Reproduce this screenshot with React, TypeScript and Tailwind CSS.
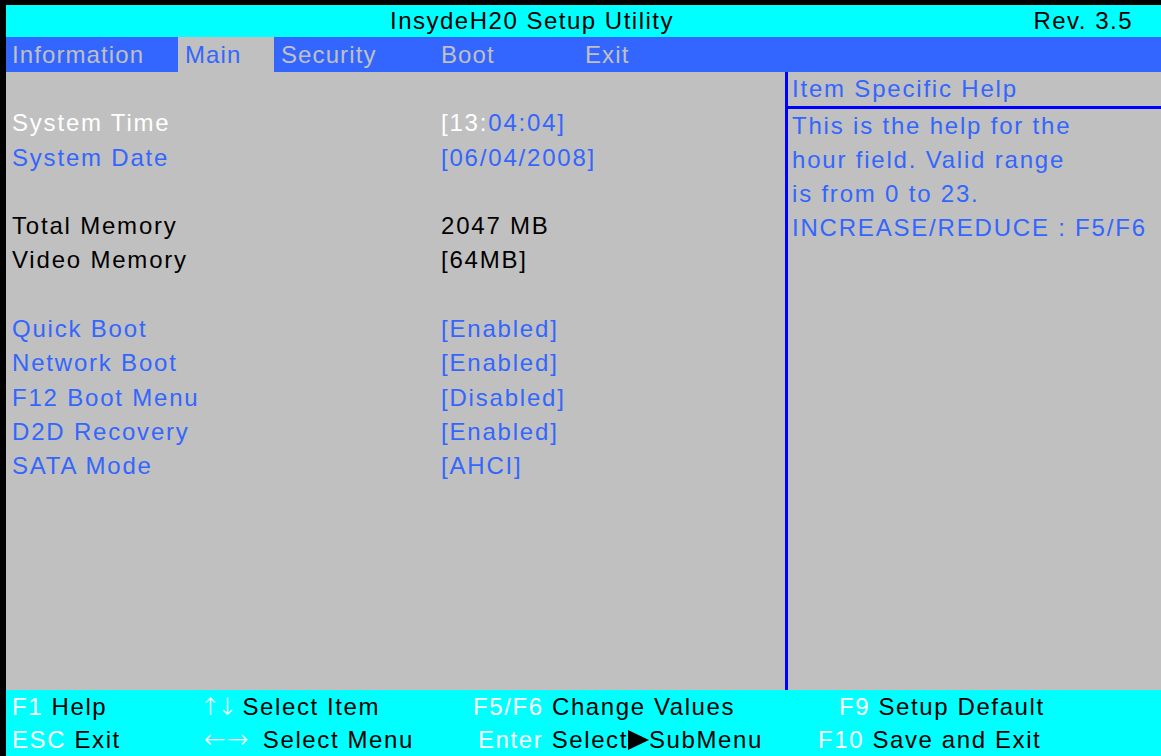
import React from 'react'

const font = { fontFamily: '"Liberation Sans", Arial, sans-serif' }

type Row = { label?: string; value?: React.ReactNode; tone?: 'link' | 'plain' | 'active' }

const rows: Row[] = [
  {},
  {
    label: 'System Time',
    tone: 'active',
    value: (
      <>
        <span className="text-white">[13:</span>
        <span className="text-[#3366ff]">04:04]</span>
      </>
    ),
  },
  { label: 'System Date', value: '[06/04/2008]', tone: 'link' },
  {},
  { label: 'Total Memory', value: '2047 MB', tone: 'plain' },
  { label: 'Video Memory', value: '[64MB]', tone: 'plain' },
  {},
  { label: 'Quick Boot', value: '[Enabled]', tone: 'link' },
  { label: 'Network Boot', value: '[Enabled]', tone: 'link' },
  { label: 'F12 Boot Menu', value: '[Disabled]', tone: 'link' },
  { label: 'D2D Recovery', value: '[Enabled]', tone: 'link' },
  { label: 'SATA Mode', value: '[AHCI]', tone: 'link' },
]

const helpLines = [
  'This is the help for the',
  'hour field. Valid range',
  'is from 0 to 23.',
  'INCREASE/REDUCE : F5/F6',
]

function Key({ k, children }: { k: React.ReactNode; children: React.ReactNode }) {
  return (
    <span className="whitespace-nowrap">
      <span className="text-white">{k}</span> <span className="text-black">{children}</span>
    </span>
  )
}

function Triangle() {
  return (
    <svg width="21" height="20" viewBox="0 0 21 20" className="inline-block align-[-2px]">
      <polygon points="0,0 21,10 0,20" fill="#000" />
    </svg>
  )
}

export default function App() {
  return (
    <div
      className="w-[1161px] h-[756px] flex flex-col border-t-[5px] border-l-[6px] border-black bg-[#c0c0c0] text-[24px] tracking-[1.8px] overflow-hidden"
      style={font}
    >
      {/* Title bar */}
      <div className="h-[32px] shrink-0 flex items-center bg-[#00ffff] text-black tracking-[1.5px]">
        <span className="pl-[384px]">InsydeH20 Setup Utility</span>
        <span className="ml-auto pr-[28px]">Rev. 3.5</span>
      </div>

      {/* Menu tabs */}
      <div className="h-[35px] shrink-0 flex items-center bg-[#3366ff] text-[#c0c0c0] tracking-[1.1px]">
        <div className="w-[172px] h-full flex items-center pl-[6px]">Information</div>
        <div className="w-[96px] h-full flex items-center pl-[7px] bg-[#c0c0c0] text-[#3366ff]">Main</div>
        <div className="w-[160px] h-full flex items-center pl-[7px]">Security</div>
        <div className="w-[144px] h-full flex items-center pl-[7px]">Boot</div>
        <div className="h-full flex items-center pl-[7px]">Exit</div>
      </div>

      {/* Body */}
      <div className="flex-1 flex min-h-0">
        <div className="w-[779px] shrink-0 pl-[6px]">
          {rows.map((r, i) => (
            <div
              key={i}
              className={
                'h-[34.3px] leading-[34.3px] flex ' +
                (r.tone === 'plain' ? 'text-black' : r.tone === 'active' ? 'text-white' : 'text-[#3366ff]')
              }
            >
              <span className="w-[429px] whitespace-nowrap">{r.label}</span>
              <span className="whitespace-nowrap">{r.value}</span>
            </div>
          ))}
        </div>
        <div className="flex-1 border-l-[3px] border-[#0000ff] text-[#3366ff]">
          <div className="h-[37px] leading-[34px] pl-[4px] border-b-[3px] border-[#0000ff]">Item Specific Help</div>
          {helpLines.map((l) => (
            <div key={l} className="h-[34px] leading-[34px] pl-[4px] whitespace-nowrap">
              {l}
            </div>
          ))}
        </div>
      </div>

      {/* Key legend */}
      <div className="h-[66px] shrink-0 bg-[#00ffff] flex flex-col pl-[6px] tracking-[1.6px]">
        <div className="h-[33px] flex items-center">
          <div className="w-[188px]"><Key k="F1">Help</Key></div>
          <div className="w-[273px]">
            <Key
              k={
                <span className="text-[24px] leading-none tracking-[-3px] font-['DejaVu_Sans',sans-serif] font-extralight">
                  ↑↓
                </span>
              }
            >
              Select Item
            </Key>
          </div>
          <div className="w-[366px]"><Key k="F5/F6">Change Values</Key></div>
          <div><Key k="F9">Setup Default</Key></div>
        </div>
        <div className="h-[33px] flex items-center">
          <div className="w-[190px]"><Key k="ESC">Exit</Key></div>
          <div className="w-[276px]">
            <Key
              k={
                <span className="pl-[2px] pr-[5px] text-[26px] leading-none tracking-[1px] font-['DejaVu_Sans',sans-serif] font-extralight">
                  ←→
                </span>
              }
            >
              Select Menu
            </Key>
          </div>
          <div className="w-[340px]">
            <span className="whitespace-nowrap">
              <span className="text-white">Enter</span> <span className="text-black">Select<Triangle />SubMenu</span>
            </span>
          </div>
          <div><Key k="F10">Save and Exit</Key></div>
        </div>
      </div>
    </div>
  )
}
